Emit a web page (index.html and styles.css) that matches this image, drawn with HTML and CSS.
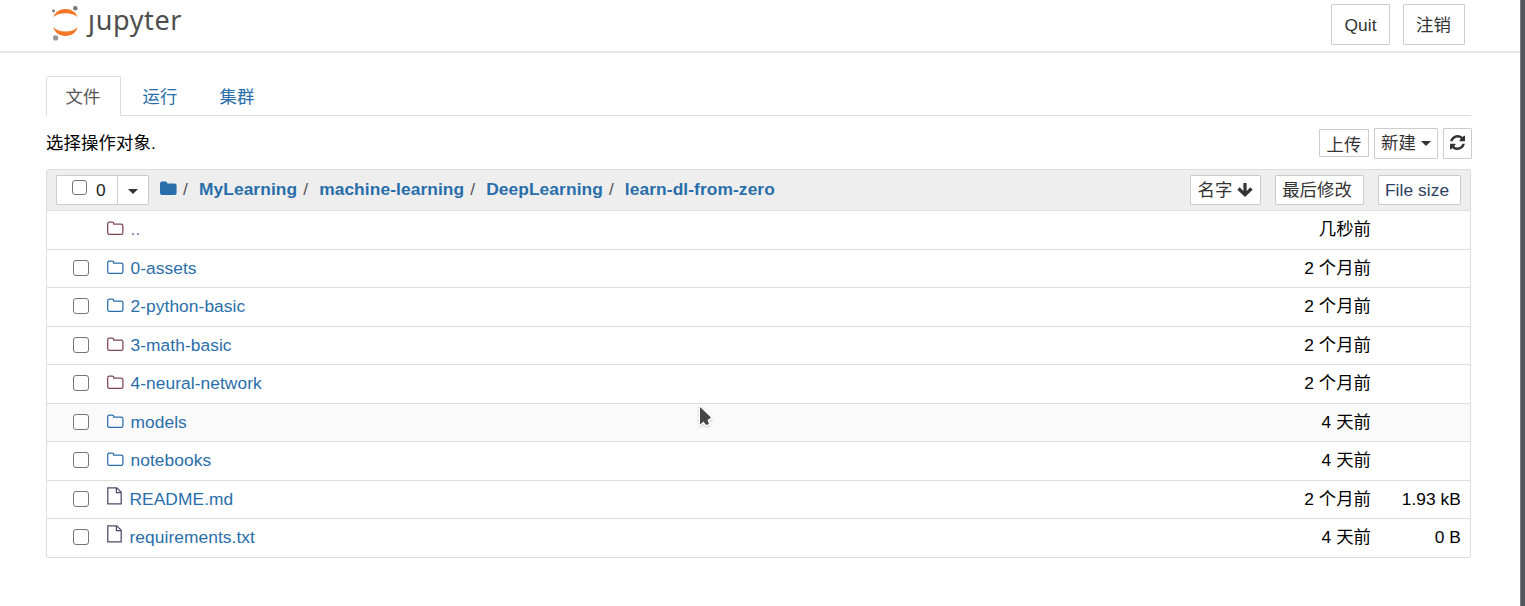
FILE: index.html
```html
<!DOCTYPE html>
<html lang="zh-CN">
<head>
<meta charset="utf-8">
<title>Jupyter</title>
<link rel="stylesheet" href="styles.css">
</head>
<body>
<svg class="defs" aria-hidden="true">
  <symbol id="folder" viewBox="0 0 18 15"><path d="M.7 2.700Q.7 1 2.400 1H5.200Q6.800 1 6.800 2.600V3H14.200Q15.900 3 15.900 4.700V11.700Q15.900 13.400 14.200 13.400H2.400Q.7 13.400.7 11.700Z" fill="none" stroke="currentColor" stroke-width="1.250"/></symbol>
  <symbol id="file" viewBox="0 0 16 18"><path d="M.8.8H9.800L14.200 5.200V16.800H.8ZM9.400.8V5.700H14.200" fill="none" stroke="currentColor" stroke-width="1.250"/></symbol>
</svg>
<header class="header">
  <a class="logo">
    <svg class="planet" width="28" height="37" viewBox="0 0 28 37">
      <path d="M2.200 13.300C4 8 8.700 5 14.500 5S25 8 26.600 13.300C24 10.700 19.500 9.200 14.500 9.200S5 10.700 2.200 13.300Z" fill="#f37726"/>
      <path d="M2.200 23.300C4 28.800 8.700 32 14.500 32S25 28.800 26.600 23.300C24 25.900 19.500 27.600 14.500 27.600S5 25.900 2.200 23.300Z" fill="#f37726"/>
      <circle cx="24.300" cy="4.300" r="2.200" fill="#767677"/>
      <circle cx="2.500" cy="7" r="1.400" fill="#767677"/>
      <circle cx="4.600" cy="33.900" r="2.600" fill="#989798"/>
    </svg>
    <span class="wordmark"><span class="stem">j</span>upyter</span>
  </a>
  <div class="header-actions"><button class="btn big quit">Quit</button><button class="btn big logout">注销</button></div>
</header>
<main class="main">
  <nav class="tabs"><a class="tab active">文件</a><a class="tab">运行</a><a class="tab">集群</a></nav>
  <div class="toolbar">
    <div class="hint">选择操作对象.</div>
    <div class="tools">
      <button class="btn upload">上传</button>
      <button class="btn new">新建<i class="caret"></i></button>
      <button class="btn refresh"><svg width="15" height="15" viewBox="0 0 1536 1536"><path fill="currentColor" d="M1511 928q0 5-1 7-64 268-268 434.500T764 1536q-146 0-282.500-55T238 1324l-129 129q-19 19-45 19t-45-19-19-45V960q0-26 19-45t45-19h448q26 0 45 19t19 45-19 45l-137 137q71 66 161 102t187 36q134 0 250-65t186-179q11-17 53-117 8-23 30-23h192q13 0 22.500 9.500t9.500 22.500zM1536 128v448q0 26-19 45t-45 19h-448q-26 0-45-19t-19-45 19-45l138-138Q969 256 768 256q-134 0-250 65T332 500q-11 17-53 117-8 23-30 23H50q-13 0-22.500-9.500T18 608v-7q65-268 270-434.500T768 0q146 0 284 55.500T1297 212l130-129q19-19 45-19t45 19 19 45z"/></svg></button>
    </div>
  </div>
  <section class="list">
    <div class="list-head">
      <div class="select"><label class="select-all"><input type="checkbox" class="check"><span>0</span></label><button class="drop"><i class="caret"></i></button></div>
      <div class="crumbs">
        <svg class="home" width="17" height="15" viewBox="0 0 17 15"><path d="M0 2.500Q0 .5 2 .5H5.400Q7.300.5 7.300 2.500H14.600Q16.600 2.500 16.600 4.500V12Q16.600 14 14.600 14H2Q0 14 0 12Z" fill="#296eaa"/></svg>
        <span class="slash">/</span><a>MyLearning</a><span class="slash">/</span><a>machine-learning</a><span class="slash">/</span><a>DeepLearning</a><span class="slash">/</span><a>learn-dl-from-zero</a>
      </div>
      <div class="sorts">
        <button class="btn name">名字<svg width="16" height="16" viewBox="0 0 16 16"><path d="M8 1V13M1.500 6.500L8 12.800L14.500 6.500" fill="none" stroke="currentColor" stroke-width="3.200"/></svg></button>
        <button class="btn modified">最后修改</button>
        <button class="btn size">File size</button>
      </div>
    </div>
    <div class="row"><span class="box"></span><svg class="icon dir visited"><use href="#folder"/></svg><a class="link visited-link">..</a><span class="time">几秒前</span><span class="bytes"></span></div>
    <div class="row"><span class="box"><input type="checkbox" class="check"></span><svg class="icon dir"><use href="#folder"/></svg><a class="link">0-assets</a><span class="time">2 个月前</span><span class="bytes"></span></div>
    <div class="row"><span class="box"><input type="checkbox" class="check"></span><svg class="icon dir"><use href="#folder"/></svg><a class="link">2-python-basic</a><span class="time">2 个月前</span><span class="bytes"></span></div>
    <div class="row"><span class="box"><input type="checkbox" class="check"></span><svg class="icon dir visited"><use href="#folder"/></svg><a class="link">3-math-basic</a><span class="time">2 个月前</span><span class="bytes"></span></div>
    <div class="row"><span class="box"><input type="checkbox" class="check"></span><svg class="icon dir visited"><use href="#folder"/></svg><a class="link">4-neural-network</a><span class="time">2 个月前</span><span class="bytes"></span></div>
    <div class="row hover"><span class="box"><input type="checkbox" class="check"></span><svg class="icon dir"><use href="#folder"/></svg><a class="link">models</a><span class="time">4 天前</span><span class="bytes"></span></div>
    <div class="row"><span class="box"><input type="checkbox" class="check"></span><svg class="icon dir"><use href="#folder"/></svg><a class="link">notebooks</a><span class="time">4 天前</span><span class="bytes"></span></div>
    <div class="row"><span class="box"><input type="checkbox" class="check"></span><svg class="icon doc"><use href="#file"/></svg><a class="link">README.md</a><span class="time">2 个月前</span><span class="bytes">1.93 kB</span></div>
    <div class="row"><span class="box"><input type="checkbox" class="check"></span><svg class="icon doc"><use href="#file"/></svg><a class="link">requirements.txt</a><span class="time">4 天前</span><span class="bytes">0 B</span></div>
  </section>
</main>
<div class="scrollbar"></div>
<svg class="cursor" width="18" height="26" viewBox="0 0 18 26"><path d="M3 3V20.500L6.500 17.500L9 21L12 20L10.500 16L14 13.500Z" fill="#444" stroke="#fff" stroke-width="2.500" paint-order="stroke"/></svg>
</body>
</html>
```
FILE: styles.css
```css
* { box-sizing: border-box; }
body {
  margin: 0;
  height: 606px;
  overflow: hidden;
  background: #fff;
  color: #000;
  font: 17.36px/24px "Liberation Sans", "Noto Sans CJK SC", sans-serif;
  letter-spacing: .06px;
}
.defs { position: absolute; width: 0; height: 0; }
.header {
  display: flex;
  justify-content: space-between;
  height: 53px;
  margin-right: 5px;
  padding: 4px 55px 0 50px;
  border-bottom: 2px solid #e7e7e7;
}
.logo { display: flex; color: #4e4e4e; }
.planet { display: block; margin: 0 0 0 1px; }
.wordmark { margin: 1px 0 0 9px; font: 27px/30px "Noto Sans", sans-serif; letter-spacing: .65px; }
.stem { display: inline-block; clip-path: inset(9px -5px -5px -5px); }
.header-actions { display: flex; gap: 13px; }
.btn {
  display: flex;
  align-items: center;
  justify-content: center;
  padding: 0;
  border: 1px solid #ccc;
  border-radius: 1px;
  background: #fff;
  color: #333;
  font: inherit;
  letter-spacing: inherit;
  white-space: nowrap;
}
.big { height: 41px; }
.quit { width: 59px; }
.logout { width: 62px; padding-right: 1px; }
.main { width: 1425px; margin: 23px 0 0 46px; }
.tabs { display: flex; gap: 2px; height: 40px; border-bottom: 1px solid #ddd; }
.tab { width: 75px; height: 40px; padding: 8px 0 0 18.5px; border: 1px solid transparent; color: #296eaa; }
.tab.active { border-color: #ddd #ddd #fff; border-radius: 2px 2px 0 0; color: #555; }
.toolbar { display: flex; justify-content: space-between; align-items: center; height: 53px; margin-right: -1px; padding-top: 1px; }
.hint { letter-spacing: .15px; }
.tools { display: flex; align-items: center; gap: 5px; }
.upload { width: 50px; height: 28px; padding-top: 3px; }
.new { width: 64px; height: 31px; gap: 5px; }
.refresh { width: 29px; height: 31px; padding-bottom: 1px; }
.caret { width: 0; border: 5px solid transparent; border-top-color: currentColor; border-bottom: 0; }
.list { border: 1px solid #ddd; border-radius: 2px; }
.list-head { display: flex; align-items: center; height: 41px; padding: 0 9px; background: #eee; border-bottom: 1px solid #ddd; }
.select { display: flex; width: 93px; height: 30px; border: 1px solid #ccc; border-radius: 1px; background: #fff; color: #333; }
.select-all { display: flex; width: 61px; padding: 2px 0 0 15px; border-right: 1px solid #ccc; }
.select-all span { margin-left: 9px; color: #222; }
.check { appearance: none; flex: none; display: block; width: 16px; height: 16px; margin: 0; border: 1px solid #767676; border-radius: 3px; background: #fff; }
.select-all .check { width: 15px; height: 15px; margin-top: 2px; }
.drop { display: flex; align-items: center; justify-content: center; flex: 1; padding: 2px 0 0; border: 0; background: none; color: #333; }
.crumbs { display: flex; flex: 1; margin: -2px 0 0 11px; color: #296eaa; font-weight: bold; letter-spacing: .085px; }
.home { margin-top: 4px; }
.slash { margin: 0 11px 0 6px; color: #555; font-weight: normal; }
.sorts { display: flex; gap: 14px; }
.sorts .btn { height: 30px; }
.name { width: 71px; gap: 5px; }
.modified { width: 89px; padding-right: 5px; }
.size { width: 83px; padding-right: 5px; color: #2c3e63; }
.row { display: flex; height: 38.5px; padding: 6px 9px 0 26px; border-bottom: 1px solid #ddd; }
.row:last-child { border-bottom: 0; height: 38px; }
.hover { background: #fafafa; }
.box { width: 34px; padding-top: 4px; }
.icon { display: block; flex: none; color: #296eaa; }
.dir { width: 18px; height: 15px; margin-top: 4px; }
.doc { width: 16px; height: 18px; margin: 0 1px 0 0; color: #4e4a68; }
.visited { color: #804554; }
.link { flex: 1; margin-left: 5.5px; color: #296eaa; }
.visited-link { color: #6c78b0; }
.bytes { width: 90px; text-align: right; }
.scrollbar { position: absolute; top: 0; right: 0; width: 5px; height: 606px; background: #55565b; border-left: 1px solid #77787c; }
.cursor { position: absolute; left: 697px; top: 404px; filter: drop-shadow(0 1px 1px #0003); }
```
